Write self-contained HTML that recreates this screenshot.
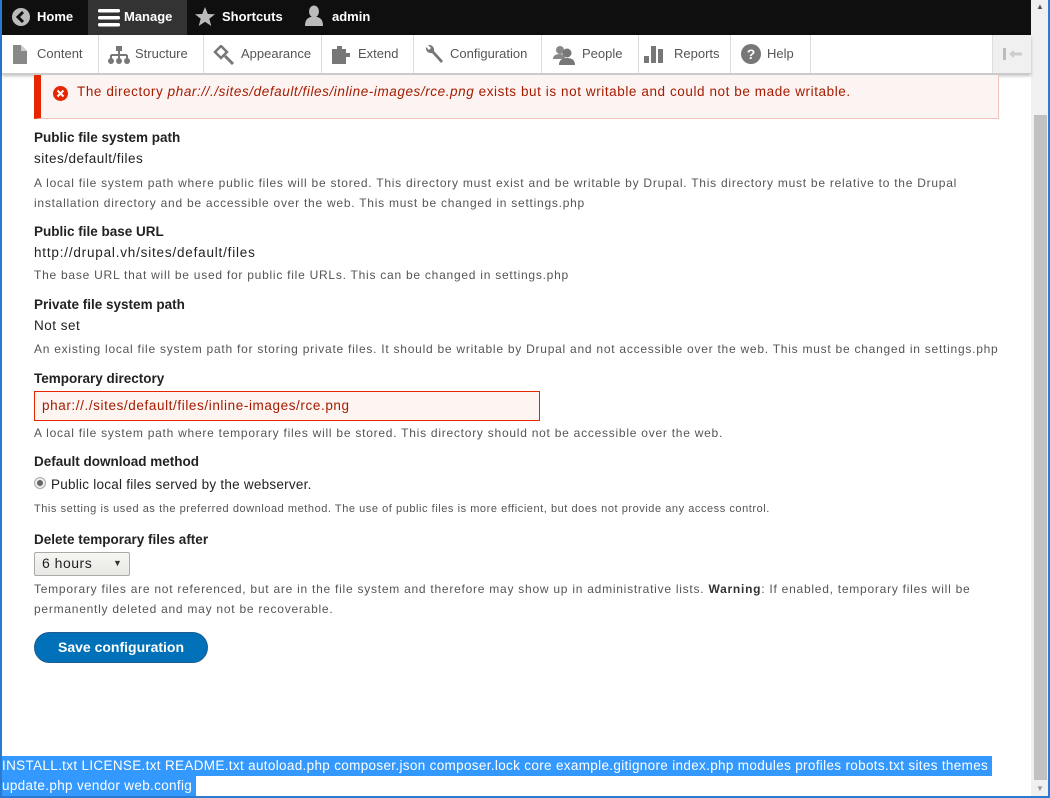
<!DOCTYPE html>
<html><head><meta charset="utf-8"><style>
*{margin:0;padding:0;box-sizing:border-box}
body{width:1050px;height:798px;overflow:hidden;background:#fff;font-family:"Liberation Sans",sans-serif;position:relative;color:#222}
.a{position:absolute;white-space:nowrap}
.lb{font-weight:bold;font-size:13.5px;color:#222}
.v{font-size:13.5px;color:#222;letter-spacing:.5px}
.d{font-size:12px;color:#555;letter-spacing:.75px}
#top{position:absolute;left:2px;top:0;width:1029px;height:35px;background:#0f0f0f}
#top .i{position:absolute;top:0;height:35px;color:#fff;font-weight:bold;font-size:13px;line-height:33px}
#tb{position:absolute;left:2px;top:35px;width:1029px;height:39px;background:#fff;border-bottom:1px solid #ccc;box-shadow:0 2px 3px rgba(0,0,0,.25)}
#tb .t{position:absolute;top:0;height:38px;line-height:38px;font-size:13px;color:#555;border-right:1px solid #ddd}
svg{position:absolute}
</style></head><body>
<div style="position:absolute;left:0;top:0;width:2px;height:798px;background:#2a7ad0"></div>
<div style="position:absolute;right:0;top:0;width:2px;height:798px;background:#2a7ad0"></div>
<div style="position:absolute;left:0;bottom:0;width:1050px;height:2px;background:#2a7ad0"></div>
<div style="position:absolute;left:1031px;top:0;width:17px;height:796px;background:#f0f0f0"></div>
<div style="position:absolute;left:1034px;top:115px;width:13px;height:665px;background:#c1c1c1"></div>
<div class="a" style="left:1036px;top:2px;font-size:8px;color:#555">▲</div>
<div class="a" style="left:1036px;top:784px;font-size:8px;color:#999">▼</div>

<div id="top">
<div style="position:absolute;left:86px;top:0;width:99px;height:35px;background:#333"></div>
<svg style="left:9px;top:7px" width="20" height="20"><circle cx="10" cy="10" r="9" fill="#bbb"/><path d="M12 5 L7 10 L12 15" stroke="#111" stroke-width="3" fill="none"/></svg>
<div class="i" style="left:35px">Home</div>
<svg style="left:96px;top:8px" width="22" height="20"><rect y="1" width="22" height="3.5" rx="1.5" fill="#fff"/><rect y="8" width="22" height="3.5" rx="1.5" fill="#fff"/><rect y="15" width="22" height="3.5" rx="1.5" fill="#fff"/></svg>
<div class="i" style="left:122px">Manage</div>
<svg style="left:192px;top:6px" width="22" height="21"><path d="M11 1 L13.8 8 L21 8.3 L15.3 12.8 L17.3 20 L11 15.8 L4.7 20 L6.7 12.8 L1 8.3 L8.2 8 Z" fill="#bbb"/></svg>
<div class="i" style="left:220px">Shortcuts</div>
<svg style="left:302px;top:5px" width="20" height="22"><ellipse cx="10" cy="6.5" rx="5" ry="6" fill="#bbb"/><path d="M1 21 Q1 13 7 12 L13 12 Q19 13 19 21 Z" fill="#bbb"/></svg>
<div class="i" style="left:330px">admin</div>
</div>

<div id="tb">
<div class="t" style="left:0;width:97px;padding-left:35px">Content</div>
<svg style="left:11px;top:10px" width="14" height="19"><path d="M0 0 H8 L14 6 V19 H0 Z" fill="#888"/><path d="M8 0 V6 H14" fill="#ccc"/></svg>
<div class="t" style="left:97px;width:105px;padding-left:36px">Structure</div>
<svg style="left:106px;top:11px" width="22" height="18"><rect x="8" y="0" width="6" height="5" fill="#777"/><path d="M11 5 V9 M3 9 H19 M3 9 V13 M11 9 V13 M19 9 V13" stroke="#777" stroke-width="2"/><circle cx="3" cy="15" r="3" fill="#777"/><circle cx="11" cy="15" r="3" fill="#777"/><circle cx="19" cy="15" r="3" fill="#777"/></svg>
<div class="t" style="left:202px;width:118px;padding-left:37px">Appearance</div>
<svg style="left:211px;top:10px" width="22" height="20"><path d="M2 7 L8 1 L14 7 L8 13 Z" fill="none" stroke="#777" stroke-width="2.5"/><path d="M12 11 L20 19" stroke="#777" stroke-width="3"/></svg>
<div class="t" style="left:320px;width:92px;padding-left:36px">Extend</div>
<svg style="left:330px;top:10px" width="22" height="20"><path d="M0 4 H5 V1 H10 V4 H14 V8 H18 V12 H14 V19 H0 Z" fill="#777"/></svg>
<div class="t" style="left:412px;width:128px;padding-left:36px">Configuration</div>
<svg style="left:421px;top:9px" width="22" height="21"><path d="M3 3 A5 5 0 0 0 9 9 L18 19 L20 17 L11 7 A5 5 0 0 0 5 1 L8 4 L6 6 Z" fill="#777"/></svg>
<div class="t" style="left:540px;width:97px;padding-left:40px">People</div>
<svg style="left:551px;top:10px" width="22" height="20"><circle cx="7" cy="5" r="4" fill="#888"/><path d="M0 14 Q0 9 7 9 Q12 9 12 14Z" fill="#888"/><circle cx="14" cy="8" r="4.5" fill="#777"/><path d="M6 20 Q6 13 14 13 Q22 13 22 20Z" fill="#777"/></svg>
<div class="t" style="left:637px;width:92px;padding-left:35px">Reports</div>
<svg style="left:642px;top:9px" width="22" height="20"><rect x="0" y="12" width="5" height="7" fill="#777"/><rect x="7" y="2" width="5" height="17" fill="#777"/><rect x="14" y="5" width="5" height="14" fill="#777"/></svg>
<div class="t" style="left:729px;width:80px;padding-left:36px">Help</div>
<svg style="left:739px;top:9px" width="20" height="20"><circle cx="10" cy="10" r="10" fill="#777"/><text x="10" y="15" text-anchor="middle" font-family="Liberation Sans" font-weight="bold" font-size="14" fill="#fff">?</text></svg>
<div style="position:absolute;left:990px;top:0;width:39px;height:38px;background:#f0f0f0;border-left:1px solid #ddd"></div>
<svg style="left:1001px;top:13px" width="20" height="12"><rect x="0" y="0" width="3" height="12" fill="#bbb"/><path d="M6 6 L11 2 V4.5 H19 V7.5 H11 V10 Z" fill="#ccc"/></svg>
</div>

<div style="position:absolute;left:34px;top:75px;width:965px;height:44px;background:#fcf4f2;border:1px solid #f2c4be;border-left:7px solid #e62600;border-top:none"></div>
<svg style="left:53px;top:86px" width="15" height="15"><circle cx="7.5" cy="7.5" r="7.5" fill="#e62600"/><path d="M4.5 4.5 L10.5 10.5 M10.5 4.5 L4.5 10.5" stroke="#fff" stroke-width="2"/></svg>
<div class="a" style="left:77px;top:84px;font-size:13.5px;color:#a51b00;letter-spacing:.58px">The directory <i>phar://./sites/default/files/inline-images/rce.png</i> exists but is not writable and could not be made writable.</div>

<div class="a lb" style="left:34px;top:130px">Public file system path</div>
<div class="a v" style="left:34px;top:151px">sites/default/files</div>
<div class="a d" style="left:34px;top:176px">A local file system path where public files will be stored. This directory must exist and be writable by Drupal. This directory must be relative to the Drupal</div>
<div class="a d" style="left:34px;top:196px">installation directory and be accessible over the web. This must be changed in settings.php</div>

<div class="a lb" style="left:34px;top:224px">Public file base URL</div>
<div class="a v" style="left:34px;top:245px;letter-spacing:.8px">http://drupal.vh/sites/default/files</div>
<div class="a d" style="left:34px;top:268px">The base URL that will be used for public file URLs. This can be changed in settings.php</div>

<div class="a lb" style="left:34px;top:297px">Private file system path</div>
<div class="a v" style="left:34px;top:318px">Not set</div>
<div class="a d" style="left:34px;top:342px">An existing local file system path for storing private files. It should be writable by Drupal and not accessible over the web. This must be changed in settings.php</div>

<div class="a lb" style="left:34px;top:371px">Temporary directory</div>
<div style="position:absolute;left:34px;top:391px;width:506px;height:30px;background:#fdf5f2;border:1px solid #e62600"></div>
<div class="a v" style="left:42px;top:398px;color:#a51b00;letter-spacing:.6px">phar://./sites/default/files/inline-images/rce.png</div>
<div class="a d" style="left:34px;top:426px">A local file system path where temporary files will be stored. This directory should not be accessible over the web.</div>

<div class="a lb" style="left:34px;top:454px">Default download method</div>
<svg style="left:34px;top:477px" width="12" height="12"><circle cx="6" cy="6" r="5.5" fill="#eee" stroke="#aaa"/><circle cx="6" cy="6" r="3" fill="#666"/></svg>
<div class="a v" style="left:51px;top:477px;letter-spacing:.25px">Public local files served by the webserver.</div>
<div class="a d" style="left:34px;top:503px;font-size:11px;letter-spacing:.55px">This setting is used as the preferred download method. The use of public files is more efficient, but does not provide any access control.</div>

<div class="a lb" style="left:34px;top:532px">Delete temporary files after</div>
<div style="position:absolute;left:34px;top:552px;width:96px;height:24px;background:linear-gradient(#f6f6f3,#e8e8e4);border:1px solid #aaa;border-radius:2px"></div>
<div class="a v" style="left:42px;top:555px;font-size:14px">6 hours</div>
<div class="a" style="left:113px;top:558px;font-size:9px;color:#333">▼</div>
<div class="a d" style="left:34px;top:582px">Temporary files are not referenced, but are in the file system and therefore may show up in administrative lists. <b style="color:#333">Warning</b>: If enabled, temporary files will be</div>
<div class="a d" style="left:34px;top:602px">permanently deleted and may not be recoverable.</div>

<div style="position:absolute;left:34px;top:632px;width:174px;height:31px;background:#0071b8;border:1px solid #1e5c90;border-radius:16px"></div>
<div class="a" style="left:34px;top:639px;width:174px;text-align:center;color:#fff;font-weight:bold;font-size:14px">Save configuration</div>

<div class="a" style="left:2px;top:756px;font-size:13.5px;color:#fff;background:#3399ff;line-height:20px;letter-spacing:.33px">INSTALL.txt LICENSE.txt README.txt autoload.php composer.json composer.lock core example.gitignore index.php modules profiles robots.txt sites themes&nbsp;</div>
<div class="a" style="left:2px;top:776px;font-size:13.5px;color:#fff;background:#3399ff;line-height:20px;letter-spacing:.33px">update.php vendor web.config&nbsp;</div>
</body></html>
